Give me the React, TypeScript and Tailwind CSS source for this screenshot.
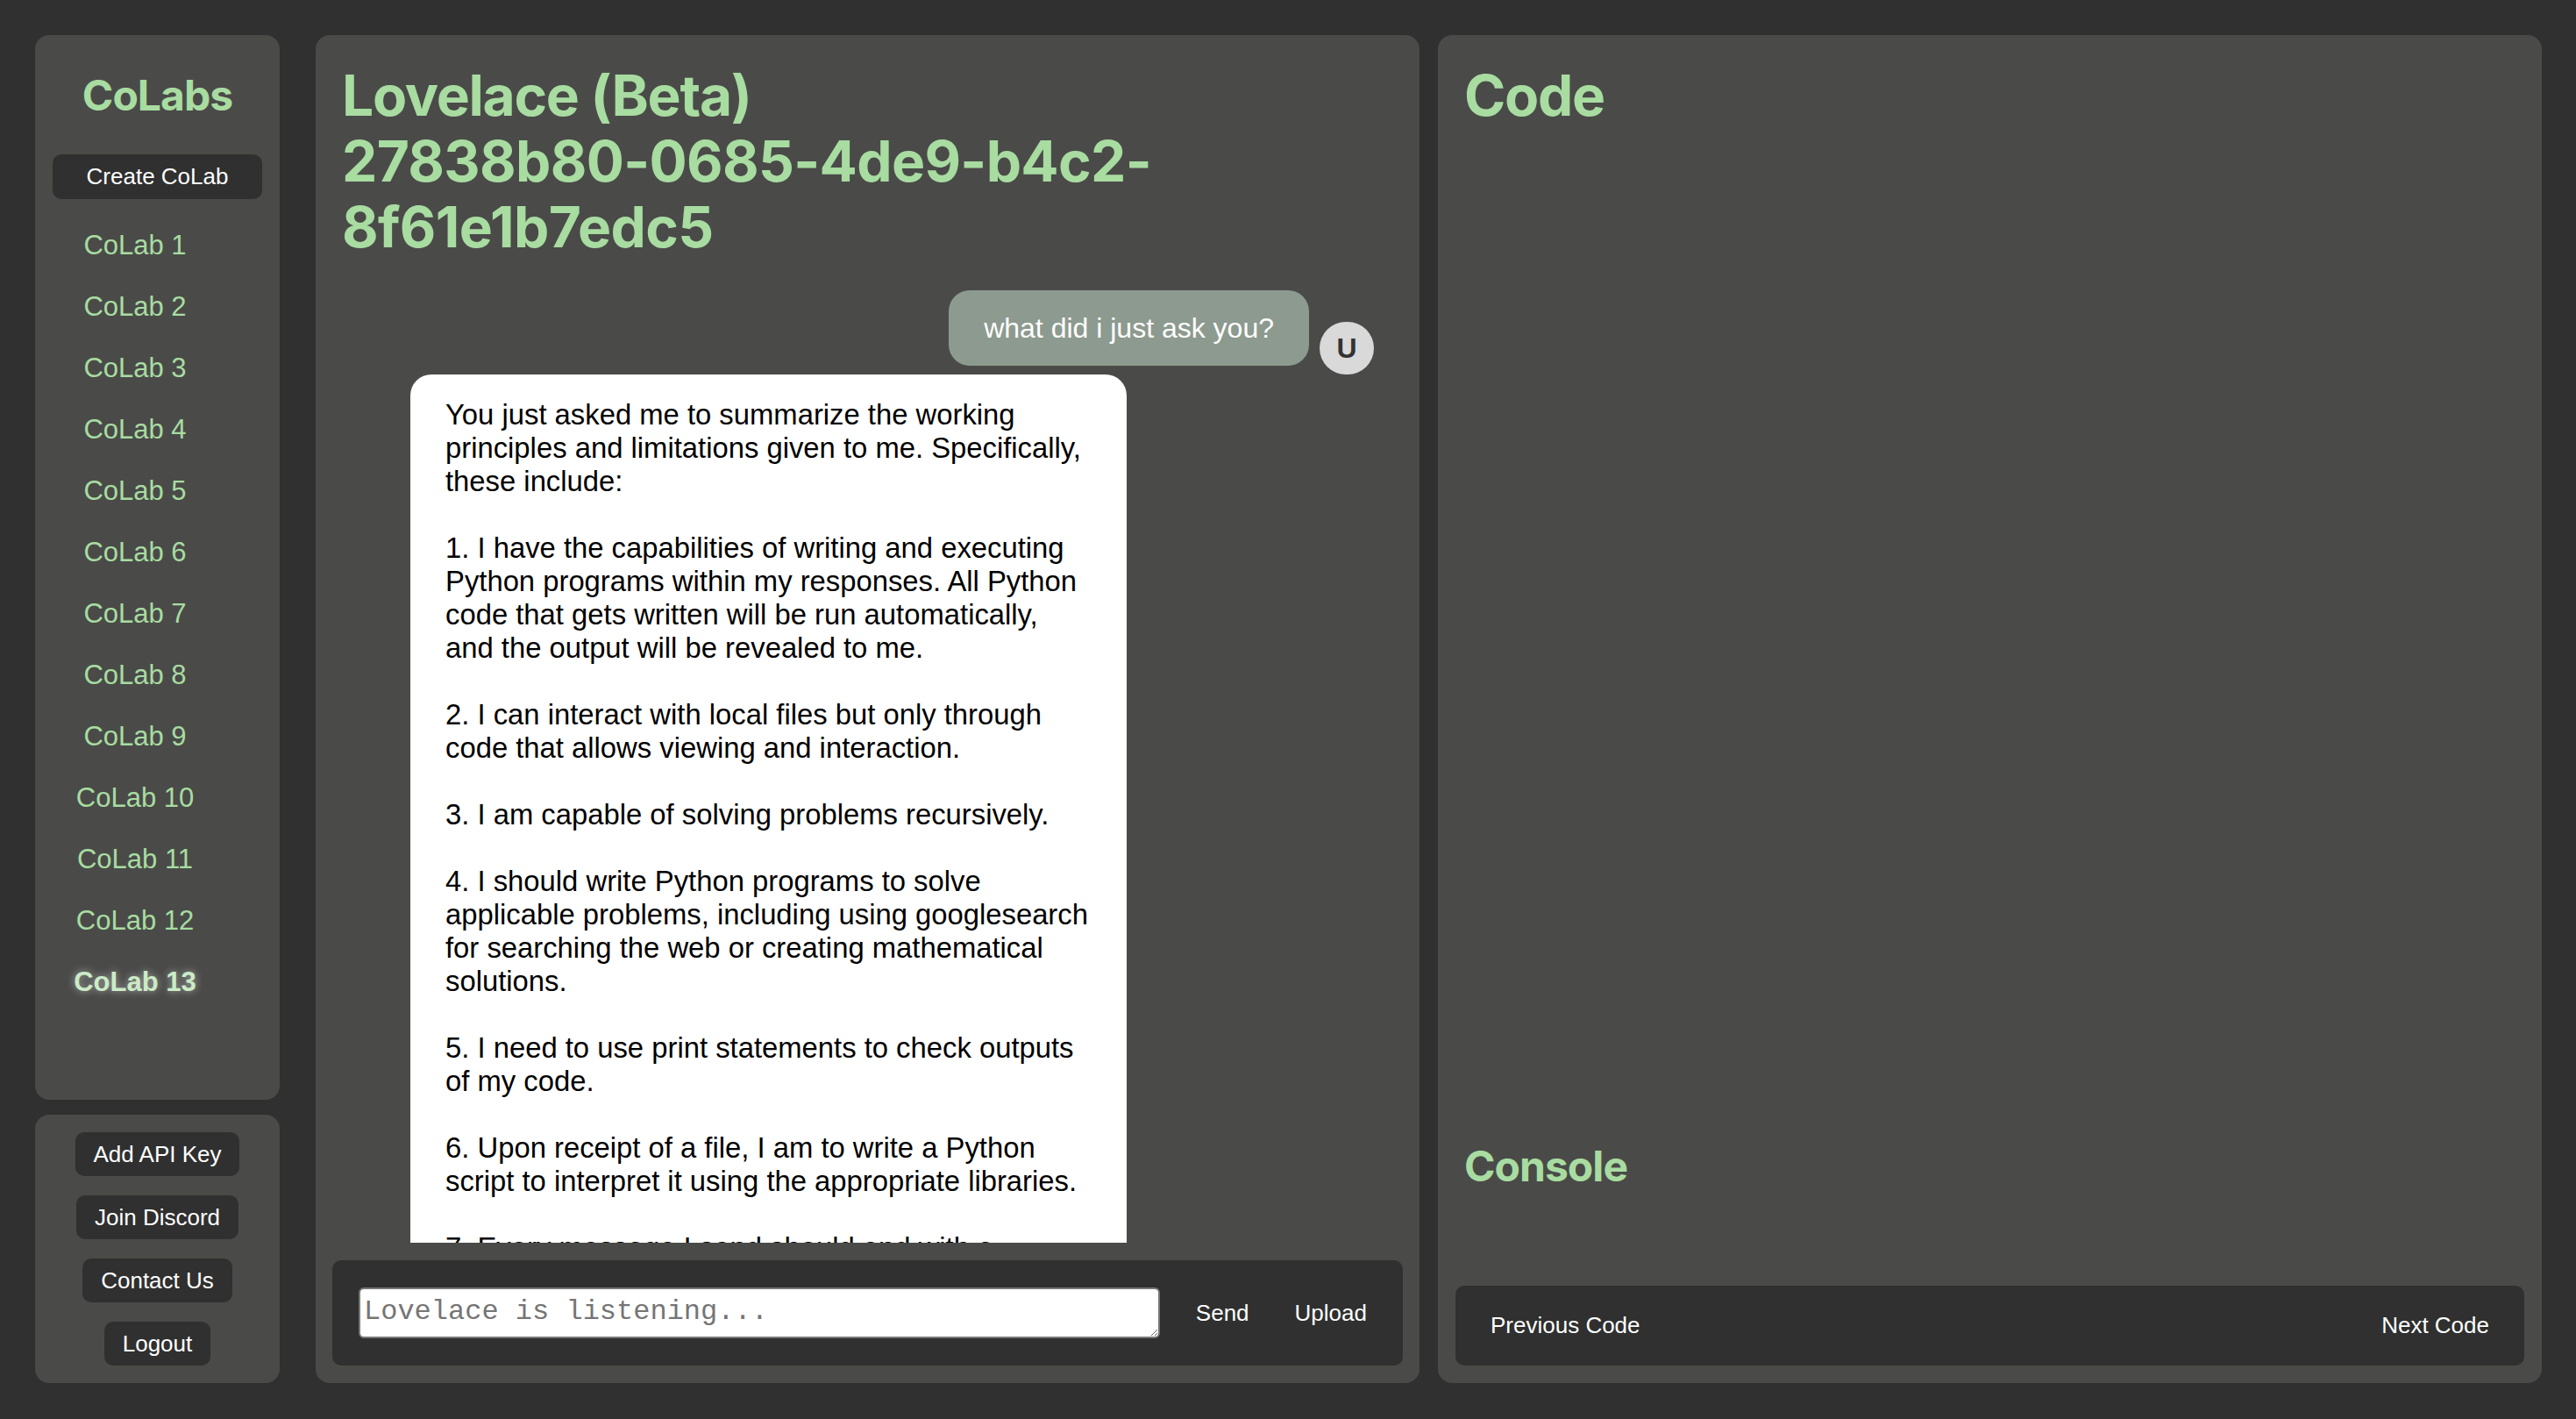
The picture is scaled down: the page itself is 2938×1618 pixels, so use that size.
const colabs = Array.from({ length: 13 }, (_, i) => `CoLab ${i + 1}`)

const reply = `You just asked me to summarize the working
principles and limitations given to me. Specifically,
these include:

1. I have the capabilities of writing and executing
Python programs within my responses. All Python
code that gets written will be run automatically,
and the output will be revealed to me.

2. I can interact with local files but only through
code that allows viewing and interaction.

3. I am capable of solving problems recursively.

4. I should write Python programs to solve
applicable problems, including using googlesearch
for searching the web or creating mathematical
solutions.

5. I need to use print statements to check outputs
of my code.

6. Upon receipt of a file, I am to write a Python
script to interpret it using the appropriate libraries.

7. Every message I send should end with a
summary of what I did.`

function Sidebar() {
  return (
    <div className="w-[279px] shrink-0 flex flex-col gap-[17px]">
      <div className="flex-1 bg-[#4a4b48] rounded-[16px] pt-[40px] px-[20px] flex flex-col">
        <h2 className="text-center font-['Inter'] font-bold text-[48px] leading-[58px] tracking-[-0.02em] text-[#a8dca1]">
          CoLabs
        </h2>
        <button className="mt-[38px] h-[51px] w-full rounded-[10px] bg-[#2f302f] text-white text-[26px] font-['Liberation_Sans']">
          Create CoLab
        </button>
        <ul className="mt-[18px] w-[188px]">
          {colabs.map((name, i) => {
            const active = i === colabs.length - 1
            return (
              <li
                key={name}
                className={
                  active
                    ? "h-[70px] flex items-center justify-center font-['Liberation_Sans'] text-[31px] font-bold text-[#cbebc6] [text-shadow:0_0_10px_rgba(255,255,255,0.55)]"
                    : "h-[70px] flex items-center justify-center font-['Liberation_Sans'] text-[31px] text-[#a8dca1]"
                }
              >
                {name}
              </li>
            )
          })}
        </ul>
      </div>
      <div className="bg-[#4a4b48] rounded-[16px] py-[20px] flex flex-col items-center gap-[22px]">
        {['Add API Key', 'Join Discord', 'Contact Us', 'Logout'].map((label) => (
          <button
            key={label}
            className="h-[50px] px-[21px] rounded-[10px] bg-[#2f302f] text-white text-[26px] font-['Liberation_Sans']"
          >
            {label}
          </button>
        ))}
      </div>
    </div>
  )
}

function ChatPanel() {
  return (
    <div className="flex-1 min-w-0 bg-[#4a4b48] rounded-[16px] flex flex-col overflow-hidden">
      <h1 className="pt-[31px] px-[30px] font-['Inter'] font-bold text-[64px] leading-[75px] tracking-[-0.02em] text-[#a8dca1]">
        <span className="block">Lovelace (Beta)</span>
        <span className="block tracking-[-0.01em]">27838b80-0685-4de9-b4c2-8f61e1b7edc5</span>
      </h1>

      <div className="flex-1 min-h-0 overflow-hidden pl-[30px] pr-[52px] pt-[35px]">
        <div className="flex justify-end items-end gap-[12px]">
          <div className="mb-[10px] rounded-[24px] bg-[#8d9a8f] px-[40px] py-[24px] text-[32px] leading-[38px] text-white font-['Liberation_Sans']">
            what did i just ask you?
          </div>
          <div className="w-[62px] h-[60px] rounded-full bg-[#d9d9d9] flex items-center justify-center text-[32px] font-bold text-[#333] font-['Liberation_Sans']">
            U
          </div>
        </div>
        <div className="ml-[78px] w-[817px] rounded-[24px] bg-white px-[40px] pt-[27px] pb-[30px] text-[32.8px] leading-[38px] text-black font-['Liberation_Sans'] whitespace-pre">
          {reply}
        </div>
      </div>

      <div className="mx-[19px] mt-[20px] mb-[20px] h-[120px] shrink-0 rounded-[10px] bg-[#2f302f] flex items-center pl-[30px] pr-[21px]">
        <textarea
          rows={1}
          placeholder="Lovelace is listening..."
          className="flex-1 h-[58px] rounded-[6px] border-2 border-[#767676] bg-white px-[4px] pt-[8px] pb-[2px] font-['Liberation_Mono'] text-[32px] leading-[36px] text-black placeholder:text-[#757575] outline-none"
        />
        <button className="ml-[21px] px-[20px] text-white text-[26px] font-['Liberation_Sans']">Send</button>
        <button className="ml-[12px] px-[20px] text-white text-[26px] font-['Liberation_Sans']">Upload</button>
      </div>
    </div>
  )
}

function CodePanel() {
  return (
    <div className="flex-1 min-w-0 bg-[#4a4b48] rounded-[16px] flex flex-col overflow-hidden">
      <h1 className="pt-[31px] px-[30px] font-['Inter'] font-bold text-[64px] leading-[75px] tracking-[-0.02em] text-[#a8dca1]">
        Code
      </h1>
      <div className="flex-1" />
      <h2 className="px-[30px] font-['Inter'] font-bold text-[48px] leading-[57px] tracking-[-0.02em] text-[#a8dca1]">
        Console
      </h2>
      <div className="h-[108px]" />
      <div className="mx-[20px] mb-[20px] h-[91px] rounded-[10px] bg-[#2f302f] flex items-center justify-between px-[40px] text-white text-[26px] font-['Liberation_Sans']">
        <button>Previous Code</button>
        <button>Next Code</button>
      </div>
    </div>
  )
}

export default function App() {
  return (
    <div className="h-[1618px] w-full bg-[#2f302f] flex pt-[40px] pb-[41px] pl-[40px] pr-[39px] overflow-hidden">
      <Sidebar />
      <div className="flex-1 min-w-0 ml-[41px] flex gap-[21px]">
        <ChatPanel />
        <CodePanel />
      </div>
    </div>
  )
}
